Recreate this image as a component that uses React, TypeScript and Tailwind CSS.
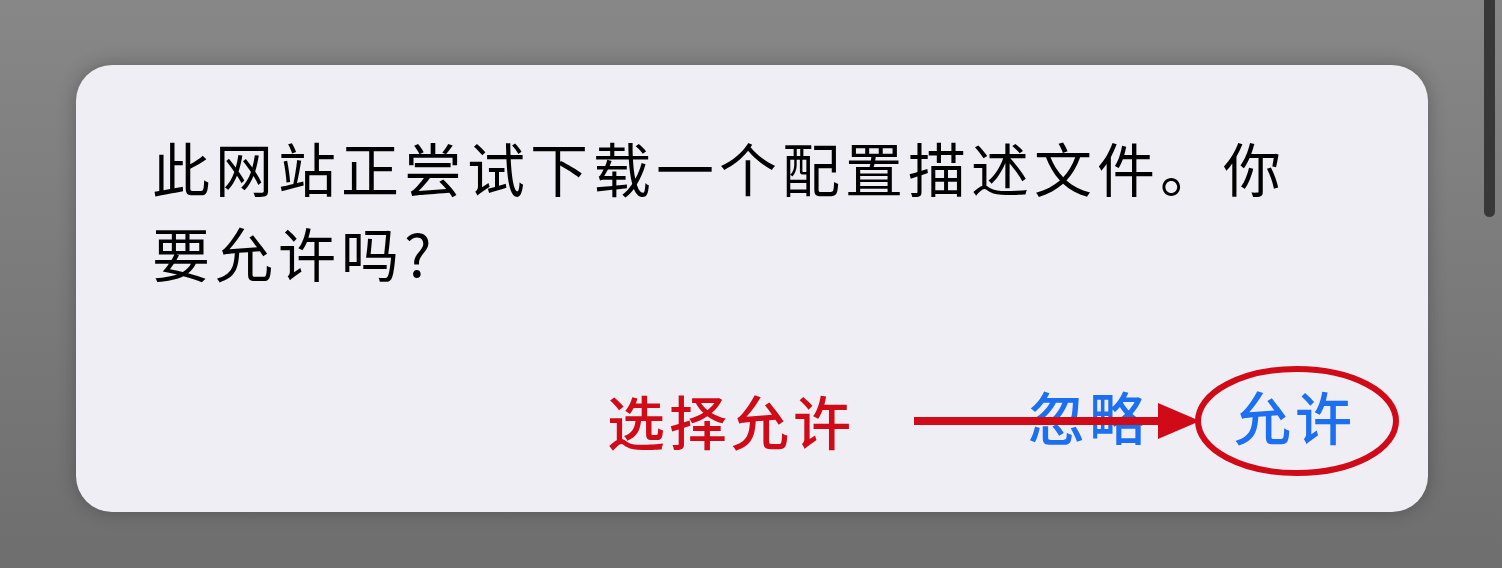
export default function App() {
  return (
    <div
      className="relative w-full h-[568px] overflow-hidden bg-gradient-to-b from-[#878787] to-[#6e6e6e] pt-[65px] pl-[76px]"
      style={{ fontFamily: '"Noto Sans CJK SC", "Noto Sans", sans-serif' }}
    >
      {/* Alert card */}
      <div className="relative w-[1352px] h-[447px] rounded-[36px] bg-[#efeef5] shadow-[0_0_18px_rgba(0,0,0,0.25)] flex flex-col">
        <p className="pt-[60px] pl-[76px] pr-[130px] text-[58px] tracking-[5px] leading-[85px] text-black">
          此网站正尝试下载一个配置描述文件。你要允许吗?
        </p>

        <div className="mt-auto pb-[67px] pr-[72px] flex justify-end gap-[84px] text-[57px] tracking-[4px] leading-[60px] font-medium text-[#1b6ff0]">
          <span>忽略</span>
          <span>允许</span>
        </div>

        {/* Annotation */}
        <span className="absolute left-[531px] top-[325px] text-[58px] tracking-[4px] leading-[60px] font-medium text-[#d10a17]">
          选择允许
        </span>
        <svg
          className="absolute left-[836px] top-[336px]"
          width="290"
          height="40"
          viewBox="0 0 290 40"
        >
          <rect x="2" y="16" width="248" height="8" fill="#d10a17" />
          <polygon points="246,2 288,20 246,38" fill="#d10a17" />
        </svg>
        <svg
          className="absolute left-[1116px] top-[298px]"
          width="210"
          height="116"
          viewBox="0 0 210 116"
        >
          <ellipse cx="105" cy="58" rx="99" ry="52" fill="none" stroke="#d10a17" strokeWidth="6" />
        </svg>
      </div>

      {/* Scrollbar */}
      <div className="absolute right-[7px] top-0 w-[11px] h-[217px] rounded-b-full bg-[#383838]" />
    </div>
  );
}
